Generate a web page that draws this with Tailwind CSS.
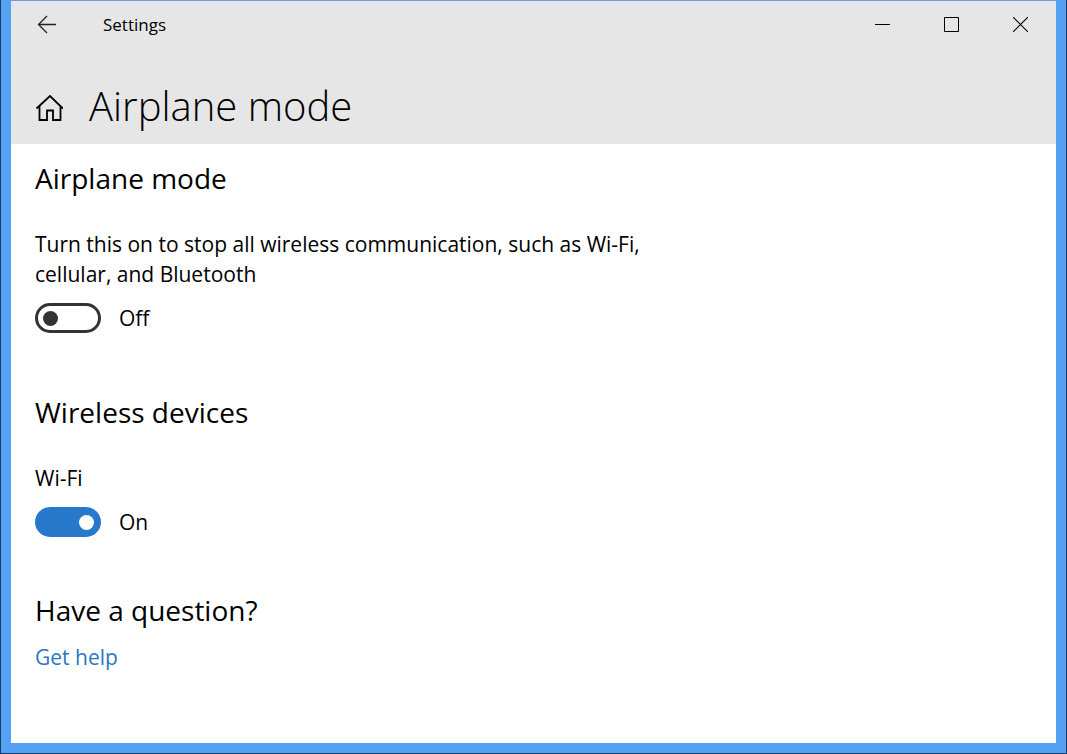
<!DOCTYPE html>
<html lang="en">
<head>
    <meta charset="UTF-8">
    <meta name="viewport" content="width=device-width, initial-scale=1.0">
    <title>Settings</title>
    <script src="https://cdn.jsdelivr.net/npm/@tailwindcss/browser@4"></script>
</head>
<body class="min-h-screen flex flex-col bg-white text-black font-['Open_Sans',sans-serif] border border-t-0 border-[#173a68]">
    <!-- Window frame -->
    <div class="grow flex flex-col border-x-10 border-b-10 border-[#55a2f5]">
        <header class="bg-[#e6e6e6] border-t border-[#7d9bc4] pb-2">
            <!-- Title bar -->
            <div class="flex items-center border-t-4 border-[#e1e6ef] pr-px">
                <button type="button" aria-label="Back" class="w-18 h-[39px] flex items-center justify-center">
                    <svg class="w-5 h-5" viewBox="0 0 20 20" fill="none" stroke="#222" stroke-width="1.3">
                        <path d="M19 9.5H1.5M10 1L1.5 9.5L10 18"/>
                    </svg>
                </button>
                <span class="ml-5 text-[17px]">Settings</span>
                <div class="ml-auto flex">
                    <button type="button" aria-label="Minimize" class="w-[69px] h-[39px] flex items-center justify-center">
                        <svg class="size-[15px]" viewBox="0 0 15 15" stroke="#000"><path d="M0 7.5H15"/></svg>
                    </button>
                    <button type="button" aria-label="Maximize" class="w-[69px] h-[39px] flex items-center justify-center">
                        <svg class="size-[15px]" viewBox="0 0 15 15" fill="none" stroke="#000"><path d="M.5 .5H14.5V14.5H.5Z"/></svg>
                    </button>
                    <button type="button" aria-label="Close" class="w-[69px] h-[39px] flex items-center justify-center">
                        <svg class="size-[15px]" viewBox="0 0 15 15" fill="none" stroke="#000" stroke-width="1.1"><path d="M0 0L15 15M15 0L0 15"/></svg>
                    </button>
                </div>
            </div>

            <!-- Page title -->
            <div class="flex items-center gap-[26px] px-6 pt-8">
                <a href="#" aria-label="Home" class="pt-1">
                    <svg class="w-7 h-7" viewBox="0 0 28 28" fill="none" stroke="#000" stroke-width="1.8">
                        <path d="M1.5 14.5L15 2L28 14.5M4.5 12V26H12V16.5H18V26H25.5V12"/>
                    </svg>
                </a>
                <h1 class="text-[40px] leading-[60px] font-light">Airplane mode</h1>
            </div>
        </header>

        <main class="px-6 pt-[14px] pb-4">
            <section>
                <h2 class="text-[28px] leading-10">Airplane mode</h2>
                <p id="airplane-label" class="mt-[31px] max-w-[640px] text-[21px] leading-[30px]">Turn this on to stop all wireless communication, such as Wi-Fi, cellular, and Bluetooth</p>
                <div class="mt-[14px] flex items-center gap-[18px] text-[21px] leading-[30px]">
                    <input type="checkbox" role="switch" id="airplane" aria-labelledby="airplane-label" class="appearance-none w-[66px] h-[30px] flex items-center px-[5px] rounded-full border-3 border-[#333] before:size-[15px] before:rounded-full before:bg-[#333] checked:justify-end checked:border-[#2878cb] checked:bg-[#2878cb] checked:before:bg-white">
                    <label for="airplane">Off</label>
                </div>
            </section>

            <section class="mt-[59px]">
                <h2 class="text-[28px] leading-10">Wireless devices</h2>
                <p id="wifi-label" class="mt-[31px] text-[21px] leading-[30px]">Wi-Fi</p>
                <div class="mt-[14px] flex items-center gap-[18px] text-[21px] leading-[30px]">
                    <input type="checkbox" role="switch" id="wifi" aria-labelledby="wifi-label" checked class="appearance-none w-[66px] h-[30px] flex items-center px-[4px] rounded-full border-3 border-[#333] before:size-[15px] before:rounded-full before:bg-[#333] checked:justify-end checked:border-[#2878cb] checked:bg-[#2878cb] checked:before:bg-white">
                    <label for="wifi">On</label>
                </div>
            </section>

            <section class="mt-[53px]">
                <h2 class="text-[28px] leading-10">Have a question?</h2>
                <a href="#" class="mt-3 inline-block text-[21px] leading-[30px] text-[#2b77c0]">Get help</a>
            </section>
        </main>
    </div>

    <script>
        // Keep the On / Off text in step with each switch
        document.querySelectorAll('input[role="switch"]').forEach(function (input) {
            input.addEventListener('change', function () {
                document.querySelector('label[for="' + input.id + '"]').textContent = input.checked ? 'On' : 'Off';
            });
        });
    </script>
</body>
</html>
